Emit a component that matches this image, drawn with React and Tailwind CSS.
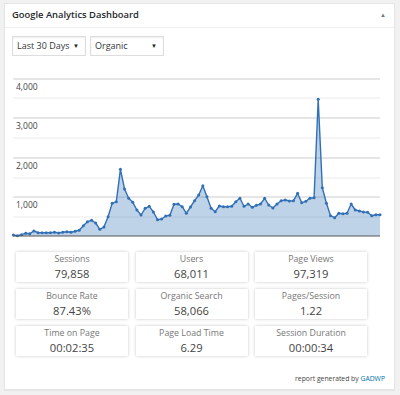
import React from 'react'

const ys = [
  235, 235.7, 234.7, 233.3, 233.7, 231, 232.7, 232.7, 232.7, 232.7, 232.3, 233, 232.3, 231.7, 232.3, 231.3,
  230.3, 225.7, 221.7, 220.3, 223, 229.3, 227, 216.7, 203.3, 201.7, 169.3, 189, 198.3, 202.3, 210, 215,
  208.3, 206.3, 212, 219.7, 219, 216, 215.3, 204.3, 204, 206.7, 213.3, 207, 200.7, 195,
  185.7, 196.7, 208.3, 211.7, 206, 206.7, 206.7, 206.3, 201.7, 198.3, 206.3, 204, 207.3, 205.3, 204, 198.3,
  205, 208, 204, 200.7, 200, 201, 200.7, 193.3, 202.7, 201.3, 198.3, 197.7, 99.3, 187.7, 203.3, 215.7,
  217.7, 213.3, 213.7, 213.3, 204, 210, 211, 212, 212.3, 215.7, 214.7, 214.7,
]

const X0 = 13.3
const X1 = 380
const BASE = 236
const step = (X1 - X0) / (ys.length - 1)
const pts = ys.map((y, i) => [X0 + i * step, y])

const stats = [
  ['Sessions', '79,858'],
  ['Users', '68,011'],
  ['Page Views', '97,319'],
  ['Bounce Rate', '87.43%'],
  ['Organic Search', '58,066'],
  ['Pages/Session', '1.22'],
  ['Time on Page', '00:02:35'],
  ['Page Load Time', '6.29'],
  ['Session Duration', '00:00:34'],
]

function Chart() {
  const line = pts.map(p => p.join(',')).join(' ')
  const area = `${X0},${BASE} ${line} ${X1},${BASE}`
  const minor = [98, 138, 178, 217]
  const major = [[79, '4,000'], [118, '3,000'], [158, '2,000'], [197, '1,000']]
  return (
    <svg width="389" height="192" viewBox="5 56 389 192" className="block">
      {minor.map(y => (
        <line key={y} x1={X0} x2={X1} y1={y} y2={y} stroke="#ebebeb" strokeWidth="1" />
      ))}
      {major.map(([y]) => (
        <line key={y} x1={X0} x2={X1} y1={y} y2={y} stroke="#cccccc" strokeWidth="1" />
      ))}
      <polygon points={area} fill="#3572b9" fillOpacity="0.32" />
      <polyline points={line} fill="none" stroke="#3270b6" strokeWidth="1.4" strokeLinejoin="round" />
      {pts.map(([x, y], i) => (
        <circle key={i} cx={x} cy={y} r="1.5" fill="#3270b6" />
      ))}
      <line x1={X0} x2={X1} y1={BASE} y2={BASE} stroke="#555" strokeWidth="1" />
      {major.map(([y, t]) => (
        <text key={t} x="16" y={y + 10.5} fontSize="8.5" fill="#444" fontFamily="'Open Sans', sans-serif">{t}</text>
      ))}
    </svg>
  )
}

function Select({ label, width }) {
  return (
    <div
      className="h-[20px] border border-[#dddddd] bg-white flex items-center justify-between pl-[4px] pr-[6px] shadow-[inset_0_1px_2px_rgba(0,0,0,0.07)]"
      style={{ width }}
    >
      <span className="text-[9px] text-[#32373c]">{label}</span>
      <span className="text-[6px] text-[#222]">▼</span>
    </div>
  )
}

export default function App() {
  return (
    <div className="w-[400px] h-[395px] bg-[#f1f1f1] pt-[3px] pl-[4px] font-['Open_Sans',sans-serif]">
      <div className="w-[391px] h-[387px] bg-white border border-[#e5e5e5] shadow-[0_1px_1px_rgba(0,0,0,0.04)] flex flex-col">
        <div className="h-[24px] border-b border-[#eeeeee] flex items-center justify-between pl-[7px] pr-[8px]">
          <span className="text-[9.4px] font-semibold text-[#23282d]">Google Analytics Dashboard</span>
          <span className="text-[6px] text-[#72777c]">▲</span>
        </div>
        <div className="flex gap-[4px] pl-[7px] mt-[8px]">
          <Select label="Last 30 Days" width={74} />
          <Select label="Organic" width={74} />
        </div>
        <Chart />
        <div className="grid grid-cols-[112px_112px_112px] gap-x-[7.5px] gap-y-[7px] pl-[11px] mt-[4px]">
          {stats.map(([k, v]) => (
            <div key={k} className="h-[30px] bg-white shadow-[0_0_3px_rgba(0,0,0,0.22)] flex flex-col items-center justify-center leading-none">
              <span className="text-[8.8px] text-[#777]">{k}</span>
              <span className="text-[11.2px] text-[#444] mt-[4px]">{v}</span>
            </div>
          ))}
        </div>
        <div className="mt-[18px] pr-[9px] text-right text-[6.8px] text-[#444]">
          report generated by <span className="text-[#0073aa]">GADWP</span>
        </div>
      </div>
    </div>
  )
}
